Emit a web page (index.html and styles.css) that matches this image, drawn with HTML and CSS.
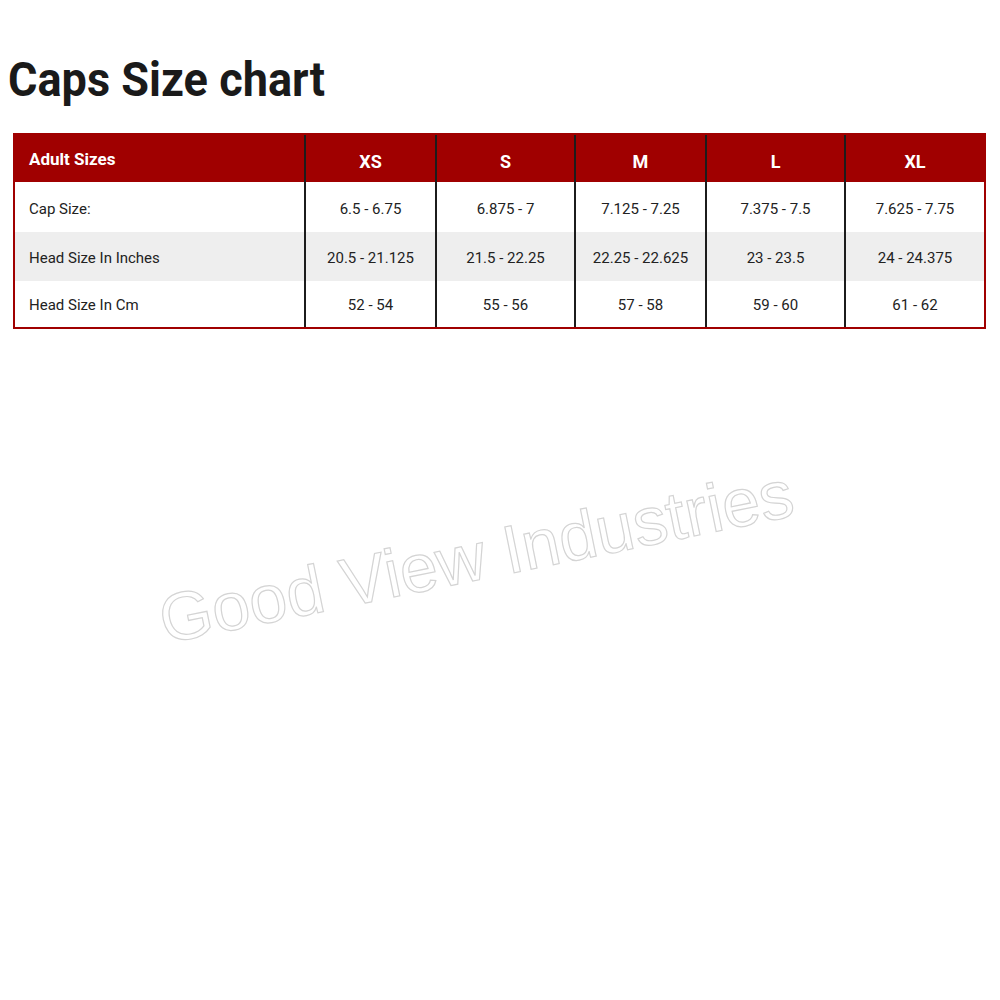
FILE: index.html
```html
<!DOCTYPE html>
<html lang="en">
<head>
<meta charset="utf-8">
<title>Caps Size chart</title>
<link rel="stylesheet" href="styles.css">
</head>
<body>
<main class="page">
  <h1 class="title">Caps Size chart</h1>
  <div class="chart">
    <div class="row head">
      <div class="cell label">Adult Sizes</div>
      <div class="cell">XS</div>
      <div class="cell">S</div>
      <div class="cell">M</div>
      <div class="cell">L</div>
      <div class="cell">XL</div>
    </div>
    <div class="row r1">
      <div class="cell label">Cap Size:</div>
      <div class="cell">6.5 - 6.75</div>
      <div class="cell">6.875 - 7</div>
      <div class="cell">7.125 - 7.25</div>
      <div class="cell">7.375 - 7.5</div>
      <div class="cell">7.625 - 7.75</div>
    </div>
    <div class="row r2 alt">
      <div class="cell label">Head Size In Inches</div>
      <div class="cell">20.5 - 21.125</div>
      <div class="cell">21.5 - 22.25</div>
      <div class="cell">22.25 - 22.625</div>
      <div class="cell">23 - 23.5</div>
      <div class="cell">24 - 24.375</div>
    </div>
    <div class="row r3">
      <div class="cell label">Head Size In Cm</div>
      <div class="cell">52 - 54</div>
      <div class="cell">55 - 56</div>
      <div class="cell">57 - 58</div>
      <div class="cell">59 - 60</div>
      <div class="cell">61 - 62</div>
    </div>
  </div>
  <div class="watermark">Good View Industries</div>
</main>
</body>
</html>
```

FILE: styles.css
```css
html, body {
  margin: 0;
  padding: 0;
  background: #ffffff;
}

.page {
  position: relative;
  width: 1000px;
  height: 1000px;
  padding-top: 52px;
  box-sizing: border-box;
  font-family: Roboto, "Liberation Sans", Arial, sans-serif;
  color: #1e1e1e;
  overflow: hidden;
}

.title {
  margin: 0 0 25px 8px;
  font-family: Roboto, "Liberation Sans", sans-serif;
  font-weight: 700;
  font-size: 49px;
  line-height: 56px;
  letter-spacing: 0;
  color: #1a1a1a;
  transform: scaleX(0.92);
  transform-origin: left center;
  white-space: nowrap;
}

.chart {
  margin-left: 13px;
  width: 973px;
  border: 2px solid #a00000;
  box-sizing: border-box;
  background: #ffffff;
}

.row {
  display: grid;
  grid-template-columns: 289px 131px 139px 131px 139px 1fr;
}

.cell {
  display: flex;
  align-items: center;
  justify-content: center;
  border-left: 2px solid #1c1c1c;
  box-sizing: border-box;
  font-size: 15px;
  color: #222222;
  padding-top: 4px;
}

.cell.label {
  border-left: none;
  justify-content: flex-start;
  padding-left: 14px;
}

.head {
  height: 47px;
  background: #a00000;
}

.head .cell {
  color: #ffffff;
  font-weight: 700;
  font-size: 18px;
  padding-top: 6px;
}

.head .cell.label {
  font-size: 17px;
  padding-top: 0;
}

.r1 { height: 50px; }
.r2 { height: 49px; }
.r3 { height: 46px; }

.alt {
  background: #eeeeee;
}

.r2 .cell, .r3 .cell { padding-top: 2px; }

.watermark {
  position: absolute;
  left: 476px;
  top: 556px;
  transform: translate(-50%, -50%) rotate(-11.5deg);
  white-space: nowrap;
  font-family: "Liberation Sans", Arial, sans-serif;
  font-size: 68px;
  color: transparent;
  -webkit-text-stroke: 1.2px #d4d4d4;
}
```
